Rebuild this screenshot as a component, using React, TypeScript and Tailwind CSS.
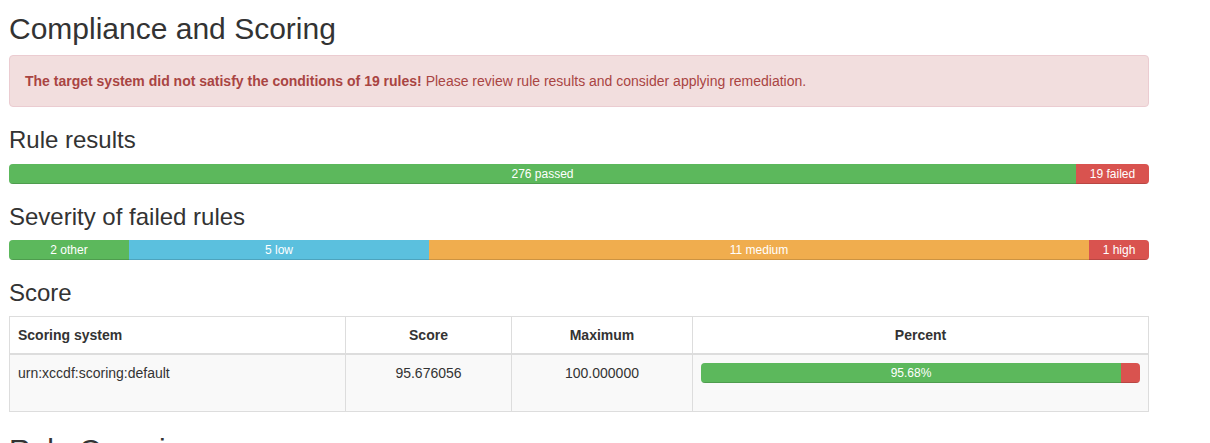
import React from 'react';

const font = { fontFamily: '"Liberation Sans", Arial, sans-serif' };

const Bar: React.FC<{ parts: { w: number; color: string; label?: string }[] }> = ({ parts }) => (
  <div className="flex h-[20px] w-full overflow-hidden rounded-[4px] bg-[#f5f5f5] shadow-[inset_0_1px_2px_rgba(0,0,0,0.1)]">
    {parts.map((p, i) => (
      <div
        key={i}
        className={`h-full shrink-0 text-center text-[12px] leading-[20px] text-white shadow-[inset_0_-1px_0_rgba(0,0,0,0.15)] ${p.color}`}
        style={{ width: `${p.w}px` }}
      >
        {p.label}
      </div>
    ))}
  </div>
);

export default function App() {
  return (
    <div className="min-h-[443px] bg-white text-[#333] text-[14px] leading-[20px]" style={font}>
      <div className="ml-[9px] w-[1140px] pt-[12px]">
        <h2 className="text-[30px] leading-[33px] font-normal">Compliance and Scoring</h2>

        <div className="mt-[10px] rounded-[4px] border border-[#ebccd1] bg-[#f2dede] p-[15px] text-[#a94442]">
          <strong className="font-bold">The target system did not satisfy the conditions of 19 rules!</strong>{' '}
          Please review rule results and consider applying remediation.
        </div>

        <h3 className="mt-[20px] text-[24px] leading-[26px] font-normal">Rule results</h3>
        <div className="mt-[11px]">
          <Bar
            parts={[
              { w: 1067, color: 'bg-[#5cb85c]', label: '276 passed' },
              { w: 73, color: 'bg-[#d9534f]', label: '19 failed' },
            ]}
          />
        </div>

        <h3 className="mt-[20px] text-[24px] leading-[26px] font-normal">Severity of failed rules</h3>
        <div className="mt-[10px]">
          <Bar
            parts={[
              { w: 120, color: 'bg-[#5cb85c]', label: '2 other' },
              { w: 300, color: 'bg-[#5bc0de]', label: '5 low' },
              { w: 660, color: 'bg-[#f0ad4e]', label: '11 medium' },
              { w: 60, color: 'bg-[#d9534f]', label: '1 high' },
            ]}
          />
        </div>

        <h3 className="mt-[20px] text-[24px] leading-[26px] font-normal">Score</h3>
        <table className="mt-[10px] w-[1140px] table-fixed border-collapse border border-[#ddd]">
          <thead>
            <tr>
              <th className="w-[336px] border border-b-2 border-[#ddd] p-[8px] text-left font-bold">Scoring system</th>
              <th className="w-[166px] border border-b-2 border-[#ddd] p-[8px] text-center font-bold">Score</th>
              <th className="w-[181px] border border-b-2 border-[#ddd] p-[8px] text-center font-bold">Maximum</th>
              <th className="border border-b-2 border-[#ddd] p-[8px] text-center font-bold">Percent</th>
            </tr>
          </thead>
          <tbody>
            <tr className="bg-[#f9f9f9]">
              <td className="border border-[#ddd] p-[8px] align-top">urn:xccdf:scoring:default</td>
              <td className="border border-[#ddd] p-[8px] text-center align-top">95.676056</td>
              <td className="border border-[#ddd] p-[8px] text-center align-top">100.000000</td>
              <td className="border border-[#ddd] p-[8px] align-top">
                <div className="mb-[20px]">
                  <Bar
                    parts={[
                      { w: 420, color: 'bg-[#5cb85c]', label: '95.68%' },
                      { w: 19, color: 'bg-[#d9534f]' },
                    ]}
                  />
                </div>
              </td>
            </tr>
          </tbody>
        </table>

        <h2 className="mt-[21px] text-[30px] leading-[33px] font-normal">Rule Overview</h2>
      </div>
    </div>
  );
}
